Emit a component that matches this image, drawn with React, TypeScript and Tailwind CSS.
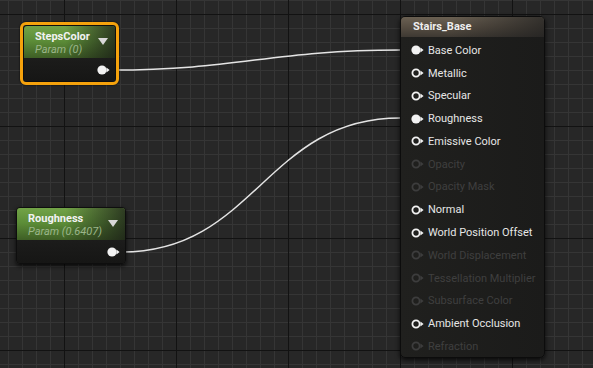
import React from "react";

const font = "font-['Roboto','Liberation_Sans',sans-serif]";

function Pin({ filled, dim }: { filled?: boolean; dim?: boolean }) {
  const c = dim ? "#3d3d3d" : "#f2f2f2";
  return (
    <svg width="13" height="10" viewBox="0 0 13 10" className="shrink-0">
      {filled ? (
        <circle cx="5" cy="5" r="4.6" fill={c} />
      ) : (
        <circle cx="5" cy="5" r="3.6" fill="none" stroke={c} strokeWidth="1.8" />
      )}
      <path d="M9.4 2.4 L12.6 5 L9.4 7.6 Z" fill={c} />
    </svg>
  );
}

function ParamNode({
  title,
  sub,
  selected,
  className,
}: {
  title: string;
  sub: string;
  selected?: boolean;
  className: string;
}) {
  return (
    <div
      className={`absolute ${className} ${
        selected ? "rounded-[6px] border-[3px] border-[#f5a20c] shadow-[0_0_2px_#000]" : "shadow-[0_2px_4px_rgba(0,0,0,0.8)] rounded-[4px]"
      }`}
    >
      <div className="relative h-full w-full overflow-hidden rounded-[4px] border border-[#0e0e0e] bg-[#1a1a19] flex flex-col">
        <div className="relative h-[32px] shrink-0 bg-[linear-gradient(180deg,#72a347_0%,#5d8e38_45%,#3e5e25_100%)]">
          <div className="absolute inset-0 bg-[linear-gradient(90deg,transparent_45%,rgba(24,26,22,0.75)_100%)]" />
          <div className="relative pl-[11px] pt-[5px] leading-none">
            <div className="text-[11px] font-bold text-[#f2f2f2]">{title}</div>
            <div className="mt-[2px] text-[11px] italic text-[#9bb58a]">{sub}</div>
          </div>
          <svg width="10" height="7" viewBox="0 0 10 7" className="absolute right-[7px] top-[12px]">
            <path d="M0 0 L10 0 L5 7 Z" fill="#d8d8d8" />
          </svg>
        </div>
        <div className="flex flex-1 items-center justify-end pr-[5px] bg-[linear-gradient(180deg,#1c1c1b,#161615)]">
          <Pin filled />
        </div>
      </div>
    </div>
  );
}

const rows: { label: string; filled?: boolean; dim?: boolean }[] = [
  { label: "Base Color", filled: true },
  { label: "Metallic" },
  { label: "Specular" },
  { label: "Roughness", filled: true },
  { label: "Emissive Color" },
  { label: "Opacity", dim: true },
  { label: "Opacity Mask", dim: true },
  { label: "Normal" },
  { label: "World Position Offset" },
  { label: "World Displacement", dim: true },
  { label: "Tessellation Multiplier", dim: true },
  { label: "Subsurface Color", dim: true },
  { label: "Ambient Occlusion" },
  { label: "Refraction", dim: true },
];

export default function App() {
  return (
    <div
      className={`relative h-[368px] w-[593px] overflow-hidden bg-[#272727] ${font} [background-image:linear-gradient(to_right,#121212_1px,transparent_1px),linear-gradient(to_bottom,#121212_1px,transparent_1px),linear-gradient(to_right,#353535_1px,transparent_1px),linear-gradient(to_bottom,#353535_1px,transparent_1px)] [background-size:112px_112px,112px_112px,14px_14px,14px_14px] [background-position:64px_14px,64px_14px,8px_0px,8px_0px]`}
    >
      <svg width="593" height="368" className="absolute left-0 top-0">
        <path d="M112 70 C 240 70, 270 50, 400 50" stroke="#e4e4e4" strokeWidth="1.5" fill="none" />
        <path d="M122 252 C 255 252, 266 118, 400 118" stroke="#e4e4e4" strokeWidth="1.5" fill="none" />
      </svg>

      <ParamNode title="StepsColor" sub="Param (0)" selected className="left-[20px] top-[22px] w-[99px] h-[63px]" />
      <ParamNode title="Roughness" sub="Param (0.6407)" className="left-[16px] top-[207px] w-[110px] h-[57px]" />

      <div className="absolute left-[400px] top-[16px] w-[145px] h-[342px] rounded-[5px] border border-[#0c0c0c] overflow-hidden shadow-[0_2px_5px_rgba(0,0,0,0.8)] bg-[linear-gradient(90deg,#20201e,#1b1b1a)] flex flex-col">
        <div className="relative h-[20px] shrink-0 bg-[linear-gradient(180deg,#6a6052_0%,#564d42_50%,#3e3933_100%)]">
          <div className="absolute inset-0 bg-[linear-gradient(90deg,transparent_35%,rgba(30,30,30,0.7)_100%)]" />
          <div className="relative pl-[12px] pt-[3px] text-[11px] font-bold leading-[14px] text-[#eeeeee]">Stairs_Base</div>
        </div>
        <div className="flex flex-col pt-[2px]">
          {rows.map((r) => (
            <div key={r.label} className="flex h-[22.77px] items-center gap-[4px] pl-[10px]">
              <Pin filled={r.filled} dim={r.dim} />
              <span className={`text-[11px] leading-none ${r.dim ? "text-[#3f3f3f]" : "text-[#e6e6e6]"}`}>{r.label}</span>
            </div>
          ))}
        </div>
      </div>
    </div>
  );
}
